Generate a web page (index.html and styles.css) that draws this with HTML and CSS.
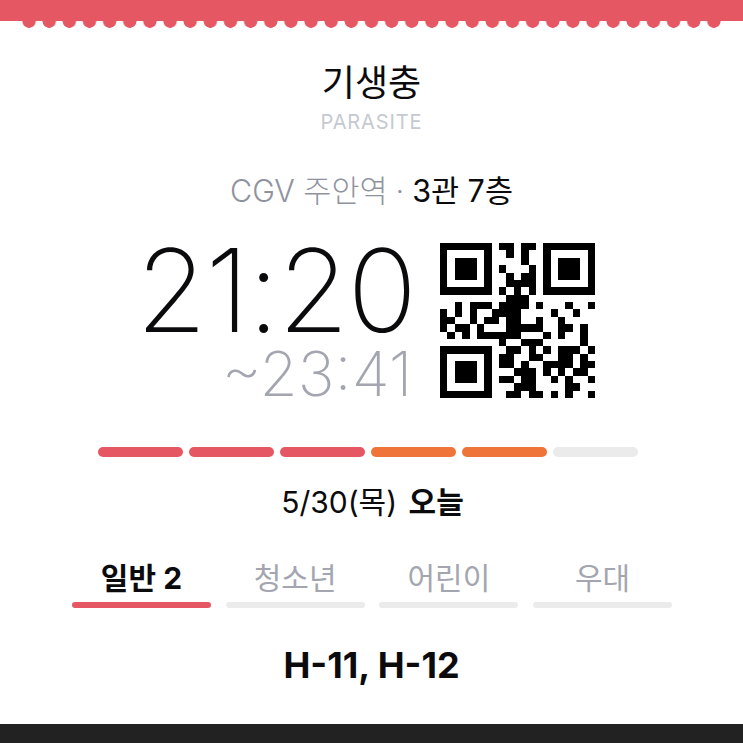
FILE: index.html
```html
<!DOCTYPE html>
<html lang="ko">
<head>
    <meta charset="UTF-8">
    <meta name="viewport" content="width=device-width, initial-scale=1.0">
    <title>기생충 모바일 티켓</title>
    <link rel="stylesheet" href="styles.css">
</head>
<body>

    <div class="ticket-top"></div>
    <div class="scallops"></div>

    <div class="ticket">
        <h1 class="movie-title">기생충</h1>
        <div class="movie-subtitle">PARASITE</div>

        <div class="venue">
            <span class="venue-name">CGV 주안역</span>
            <span class="venue-dot">·</span>
            <span>3관 7층</span>
        </div>

        <div class="showtime">
            <div class="times">
                <div class="time-start">21:20</div>
                <div class="time-end">~23:41</div>
            </div>
            <svg class="qr" viewBox="0 0 21 21">
                <path fill="#000" fill-rule="evenodd" d="M0 0h7v7h-7zM1 1h5v5h-5zM2 2h3v3h-3zM14 0h7v7h-7zM15 1h5v5h-5zM16 2h3v3h-3zM0 14h7v7h-7zM1 15h5v5h-5zM2 16h3v3h-3z"/>
                <path stroke="#000" stroke-width="1" fill="none" d="M8 .5h2M11 .5h2
                    M9 1.5h1M11 1.5h1
                    M11 2.5h1
                    M8 3.5h1M12 3.5h1
                    M9 4.5h1M11 4.5h2
                    M9 5.5h4
                    M8 6.5h1M10 6.5h1M12 6.5h1
                    M9 7.5h3
                    M2 8.5h1M4 8.5h3M8 8.5h4M13 8.5h1M17 8.5h1M20 8.5h1
                    M0 9.5h1M2 9.5h1M4 9.5h1M7 9.5h4M15 9.5h1M18 9.5h1
                    M0 10.5h2M4 10.5h1M6 10.5h2M9 10.5h2M13 10.5h1M16 10.5h1
                    M0 11.5h1M2 11.5h2M5 11.5h1M9 11.5h5M16 11.5h2M19 11.5h1
                    M1 12.5h1M3 12.5h1M5 12.5h6M14 12.5h1M16 12.5h1M19 12.5h1
                    M8 13.5h1M11 13.5h3M19 13.5h1
                    M9 14.5h2M12 14.5h1M14 14.5h1M16 14.5h3M20 14.5h1
                    M8 15.5h2M12 15.5h2M16 15.5h2M19 15.5h1
                    M8 16.5h2M11 16.5h1M14 16.5h4M19 16.5h2
                    M10 17.5h3M14 17.5h1M16 17.5h1M18 17.5h2
                    M8 18.5h2M11 18.5h2M15 18.5h1M17 18.5h1M20 18.5h1
                    M10 19.5h3M17 19.5h2
                    M9 20.5h2M12 20.5h2M15 20.5h1M17 20.5h1M20 20.5h1"/>
            </svg>
        </div>

        <div class="progress">
            <div class="segment red"></div>
            <div class="segment red"></div>
            <div class="segment red"></div>
            <div class="segment orange"></div>
            <div class="segment orange"></div>
            <div class="segment"></div>
        </div>

        <div class="date">5/30(목) <strong>오늘</strong></div>

        <div class="tabs">
            <div class="tab active">일반 2</div>
            <div class="tab">청소년</div>
            <div class="tab">어린이</div>
            <div class="tab">우대</div>
        </div>

        <div class="seats">H-11, H-12</div>
    </div>

    <div class="ticket-bottom"></div>

</body>
</html>
```
FILE: styles.css
```css
html, body {
    margin: 0;
    height: 100%;
}

body {
    font-family: Inter, "Noto Sans CJK KR", sans-serif;
    display: flex;
    flex-direction: column;
    height: 743px;
    overflow: hidden;
    background-color: #fff;
    color: #0b0b0d;
}

.ticket-top {
    height: 21px;
    flex-shrink: 0;
    background-color: #e55763;
}

.scallops {
    height: 7px;
    flex-shrink: 0;
    margin: 0 19px 0 19px;
    background-image: radial-gradient(circle at 50% 0, #e55763 6.5px, transparent 7px);
    background-size: calc(100% / 35) 7px;
}

.ticket {
    flex: 1;
    display: flex;
    flex-direction: column;
    align-items: center;
    padding-top: 30px;
}

.movie-title {
    margin: 0;
    font-size: 36px;
    line-height: 50px;
    font-weight: 400;
}

.movie-subtitle {
    margin-top: 1px;
    font-size: 20px;
    line-height: 26px;
    font-weight: 400;
    letter-spacing: 0.9px;
    color: #c6c9d0;
}

.venue {
    display: flex;
    gap: 8px;
    margin-top: 36px;
    font-size: 30.5px;
    line-height: 40px;
    font-weight: 400;
}

.venue-name,
.venue-dot {
    color: #8f939e;
    font-weight: 300;
}

.showtime {
    display: flex;
    gap: 24.5px;
    margin-top: 28px;
    margin-left: -12px;
    align-items: flex-start;
}

.times {
    display: flex;
    flex-direction: column;
    align-items: flex-end;
}

.time-start {
    font-size: 115px;
    line-height: 103px;
    font-weight: 200;
    letter-spacing: -1.5px;
}

.time-end {
    margin-right: 3px;
    font-size: 62px;
    line-height: 64px;
    font-weight: 200;
    color: #a3a6b0;
}

.qr {
    display: block;
    width: 155px;
    height: 155px;
    margin-top: 4px;
    shape-rendering: crispEdges;
}

.progress {
    display: flex;
    gap: 6px;
    margin-top: 41px;
    margin-left: -8px;
}

.segment {
    width: 85px;
    height: 10px;
    border-radius: 5px;
    background-color: #ebebeb;
}

.segment.red {
    background-color: #e55763;
}

.segment.orange {
    background-color: #ee7439;
}

.date {
    margin-top: 25px;
    margin-left: 2px;
    font-size: 30px;
    line-height: 40px;
    font-weight: 400;
}

.date strong {
    font-weight: 700;
    margin-left: 3px;
}

.tabs {
    display: flex;
    gap: 14.7px;
    margin-top: 35px;
    margin-left: 1px;
}

.tab {
    width: 139px;
    text-align: center;
    font-size: 30px;
    line-height: 42px;
    font-weight: 400;
    color: #a3a6b0;
}

.tab::after {
    content: "";
    display: block;
    height: 6px;
    margin-top: 3px;
    border-radius: 3px;
    background-color: #ebebeb;
}

.tab.active {
    font-weight: 700;
    color: #0b0b0d;
}

.tab.active::after {
    background-color: #e55763;
}

.seats {
    margin-top: 34px;
    font-size: 36px;
    line-height: 46px;
    font-weight: 700;
}

.ticket-bottom {
    height: 19px;
    flex-shrink: 0;
    background-color: #222223;
}
```
